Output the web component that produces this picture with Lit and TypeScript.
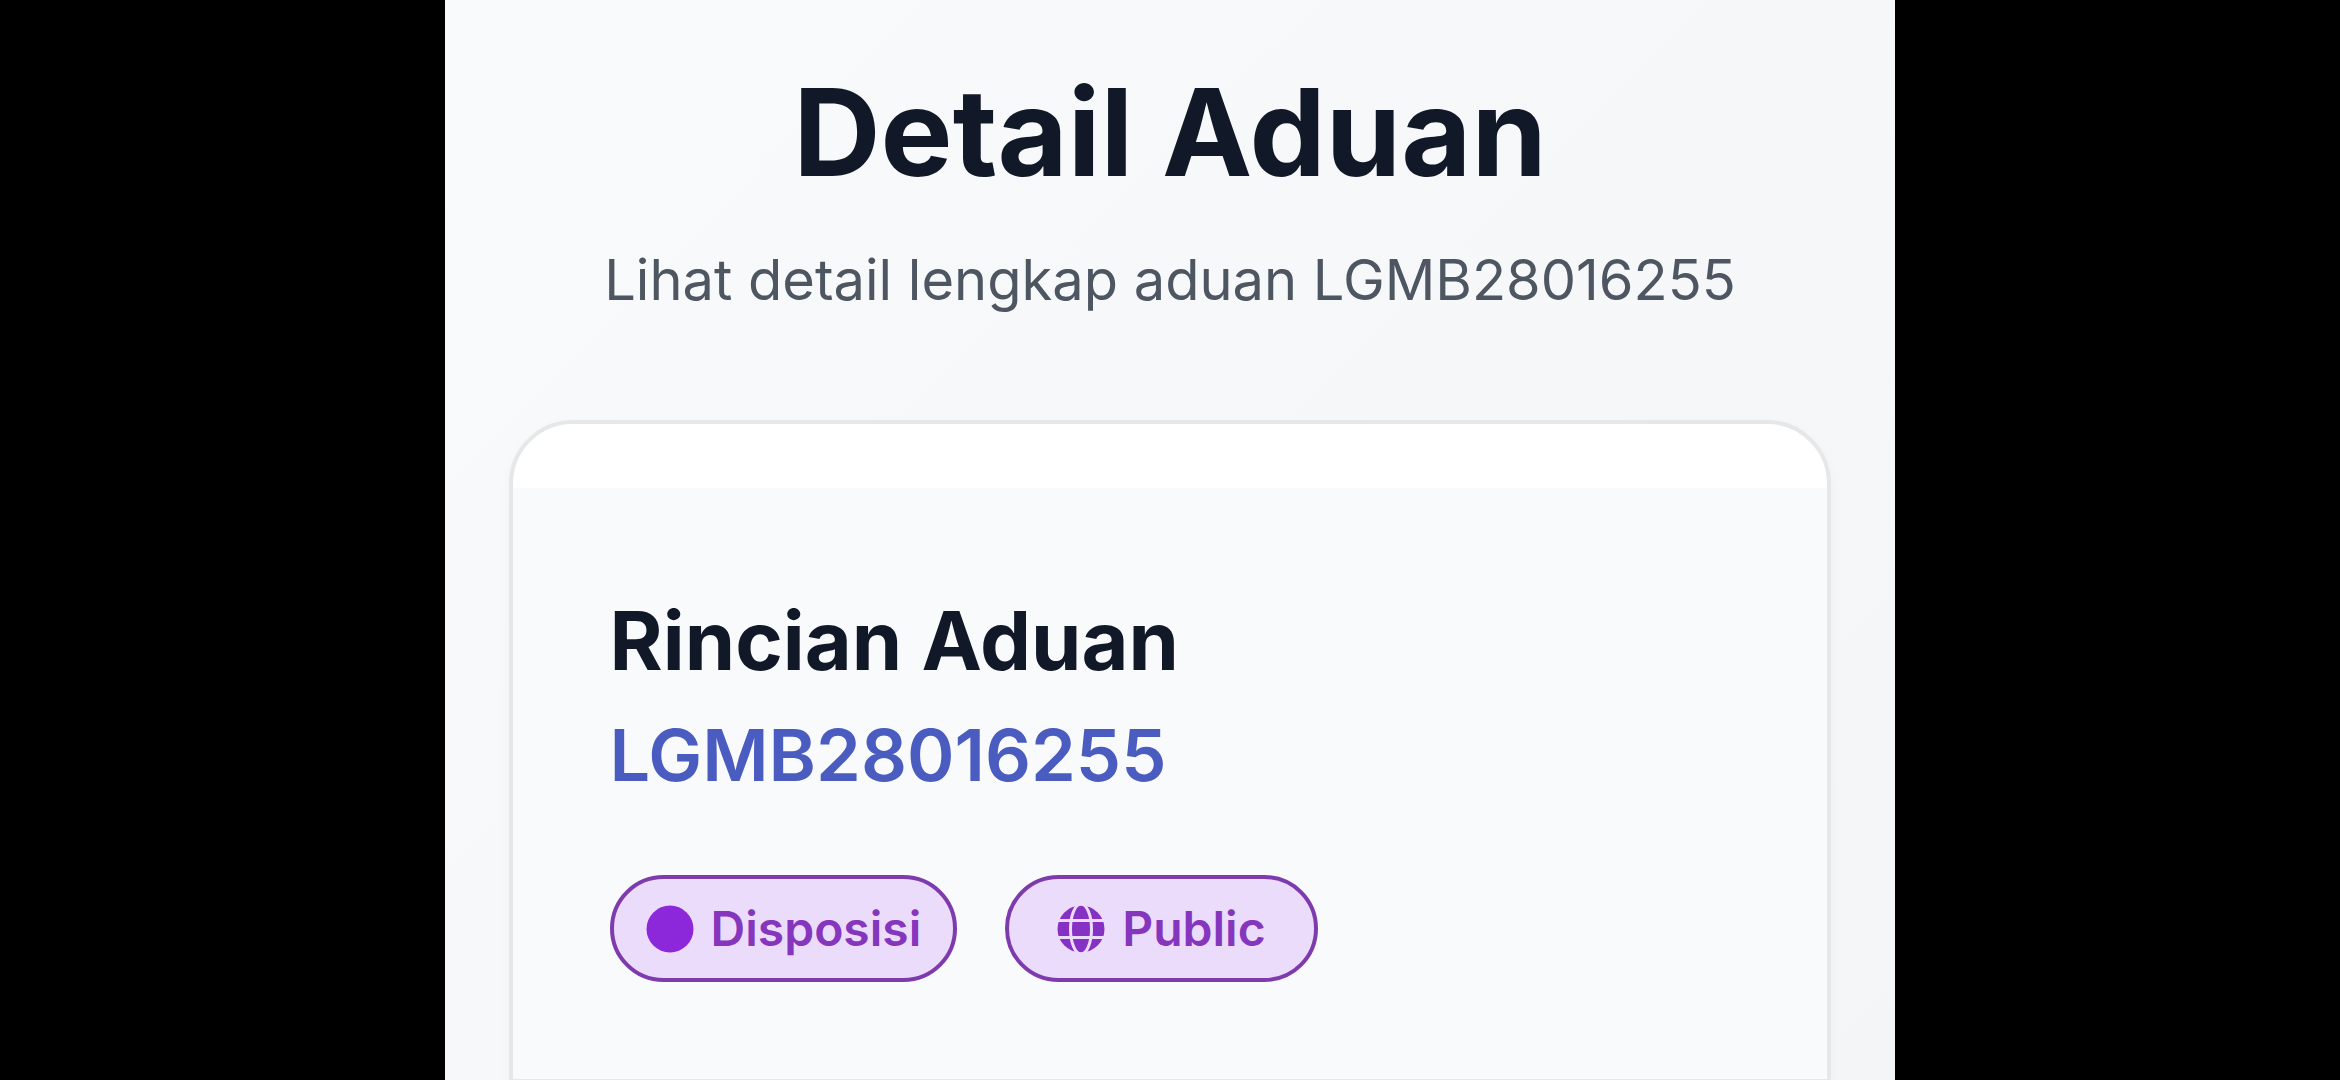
import { LitElement, html, css, svg } from "lit";
import { customElement, property } from "lit/decorators.js";

@customElement("status-badge")
class StatusBadge extends LitElement {
  @property() icon: "dot" | "globe" = "dot";
  @property() label = "";

  static styles = css`
    :host {
      display: block;
    }
    .badge {
      display: flex;
      align-items: center;
      gap: 17px;
      box-sizing: border-box;
      padding: 16px 32px;
      border: 4px solid #7e3bad;
      border-radius: 54px;
      background: #ecdcfb;
      color: #8536bd;
      font-size: 48px;
      line-height: 67px;
      font-weight: 600;
      white-space: nowrap;
    }
    .wide {
      padding: 16px 48px;
    }
    .icon {
      display: block;
      width: 48px;
      height: 48px;
    }
    .dot {
      fill: #8c28da;
    }
    .globe {
      fill: #8630c4;
    }
    .lines {
      fill: none;
      stroke: #ecdcfb;
      stroke-width: 3;
    }
  `;

  render() {
    const dot = svg`<circle class="dot" cx="24" cy="24" r="23.5"></circle>`;
    const globe = svg`
      <circle class="globe" cx="24" cy="24" r="23.5"></circle>
      <g class="lines">
        <path d="M0 15.5H48M0 32.5H48"></path>
        <ellipse cx="24" cy="24" rx="10.5" ry="25"></ellipse>
      </g>`;
    const isGlobe = this.icon === "globe";
    return html`<span class="badge ${isGlobe ? "wide" : ""}">
      <svg class="icon" viewBox="0 0 48 48" aria-hidden="true">${isGlobe ? globe : dot}</svg>
      <span>${this.label}</span>
    </span>`;
  }
}

@customElement("app-root")
class AppRoot extends LitElement {
  @property() code = "LGMB28016255";

  static styles = css`
    :host {
      display: block;
      height: 100vh;
      overflow: hidden;
      background: #000;
      font-family: Inter, "Liberation Sans", sans-serif;
    }
    .page {
      box-sizing: border-box;
      width: 62%;
      min-height: 100%;
      margin: 0 auto;
      padding: 60px 64px 0;
      background: linear-gradient(135deg, #f9fafb 0%, #f4f5f7 100%);
    }
    .intro {
      text-align: center;
      padding-bottom: 96px;
    }
    .title {
      margin: 0 0 32px;
      font-size: 121px;
      line-height: 144px;
      font-weight: 700;
      color: #111827;
    }
    .subtitle {
      margin: 0;
      font-size: 56px;
      line-height: 88px;
      color: #4d5661;
    }
    .card {
      border: 4px solid #e6e7e9;
      border-radius: 64px;
      padding: 64px 0;
      background: #fff;
      box-shadow: 0 4px 12px rgba(0, 0, 0, 0.03);
    }
    .head {
      padding: 97px;
      border-bottom: 4px solid #e6e7e9;
      background: #f9fafc;
    }
    .heading {
      margin: 0;
      font-size: 81px;
      line-height: 113px;
      font-weight: 700;
      color: #111827;
    }
    .code {
      margin: 0 0 64px;
      font-size: 72px;
      line-height: 113px;
      font-weight: 600;
      color: #4a5cc0;
    }
    .badges {
      display: flex;
      flex-wrap: wrap;
      gap: 48px;
    }
  `;

  render() {
    return html`<main class="page">
      <header class="intro">
        <h1 class="title">Detail Aduan</h1>
        <p class="subtitle">Lihat detail lengkap aduan ${this.code}</p>
      </header>
      <section class="card">
        <div class="head">
          <h2 class="heading">Rincian Aduan</h2>
          <p class="code">${this.code}</p>
          <div class="badges">
            <status-badge icon="dot" label="Disposisi"></status-badge>
            <status-badge icon="globe" label="Public"></status-badge>
          </div>
        </div>
      </section>
    </main>`;
  }
}
